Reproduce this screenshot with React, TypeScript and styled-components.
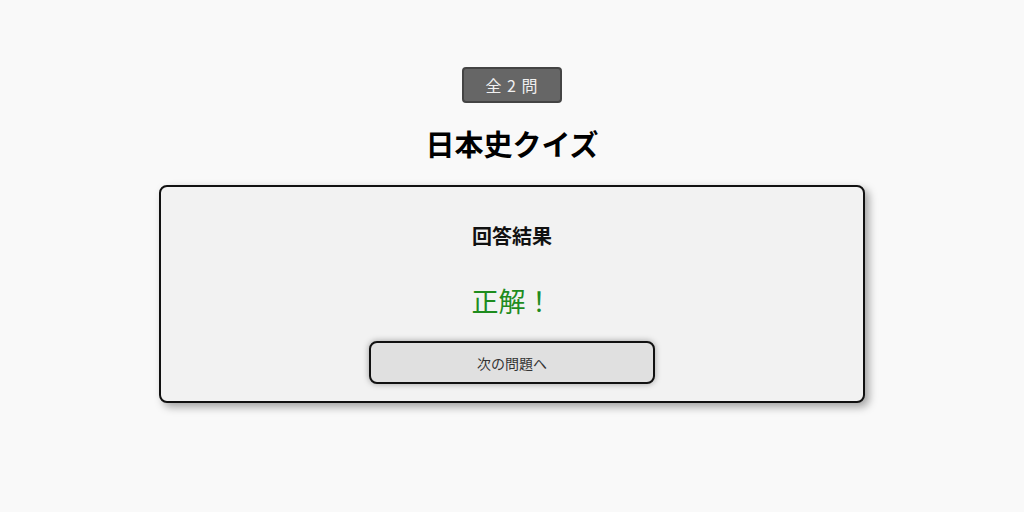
import React from 'react';
import { styled, createGlobalStyle } from 'styled-components';

const GlobalStyle = createGlobalStyle`
  body {
    margin: 0;
    background-color: #f9f9f9;
    font-family: 'Noto Sans CJK JP', 'Noto Sans', sans-serif;
  }
`;

const App = () => {
  return (
    <>
      <GlobalStyle />
      <Page>
        <CountBadge>全 2 問</CountBadge>
        <Title>日本史クイズ</Title>
        <ResultCard>
          <ResultHeading>回答結果</ResultHeading>
          <Verdict correct>正解！</Verdict>
          <NextButton type="button">次の問題へ</NextButton>
        </ResultCard>
      </Page>
    </>
  );
};

export default App;

const Page = styled.div`
  display: flex;
  flex-direction: column;
  align-items: center;
  padding: 67px 0 40px;
`;
const CountBadge = styled.div`
  display: flex;
  justify-content: center;
  align-items: center;
  box-sizing: border-box;
  width: 100px;
  height: 36px;
  background-color: #666666;
  border: 2px solid #444444;
  border-radius: 4px;
  color: #f0f0f0;
  font-size: 16px;
  letter-spacing: 1px;
`;
const Title = styled.h1`
  margin: 20px 0 0;
  font-size: 29px;
  line-height: 40px;
  font-weight: 700;
  color: #000000;
`;
const ResultCard = styled.div`
  display: flex;
  flex-direction: column;
  align-items: center;
  box-sizing: border-box;
  width: 706px;
  margin-top: 22px;
  padding: 35px 0 17px;
  background-color: #f2f2f2;
  border: 2px solid #111111;
  border-radius: 8px;
  box-shadow: 4px 4px 8px rgba(0, 0, 0, 0.35);
`;
const ResultHeading = styled.h2`
  margin: 0;
  font-size: 20px;
  line-height: 28px;
  font-weight: 700;
  color: #111111;
`;
const Verdict = styled.p<{ correct?: boolean }>`
  margin: 33px 0 0;
  font-size: 27px;
  line-height: 36px;
  color: ${({ correct }) => (correct ? '#1e8c1e' : '#c62828')};
`;
const NextButton = styled.button`
  box-sizing: border-box;
  width: 286px;
  height: 43px;
  margin-top: 22px;
  background-color: #e0e0e0;
  border: 2px solid #111111;
  border-radius: 8px;
  box-shadow: 0 0 6px rgba(0, 0, 0, 0.35);
  color: #333333;
  font-family: inherit;
  font-size: 14px;
  cursor: pointer;
`;
